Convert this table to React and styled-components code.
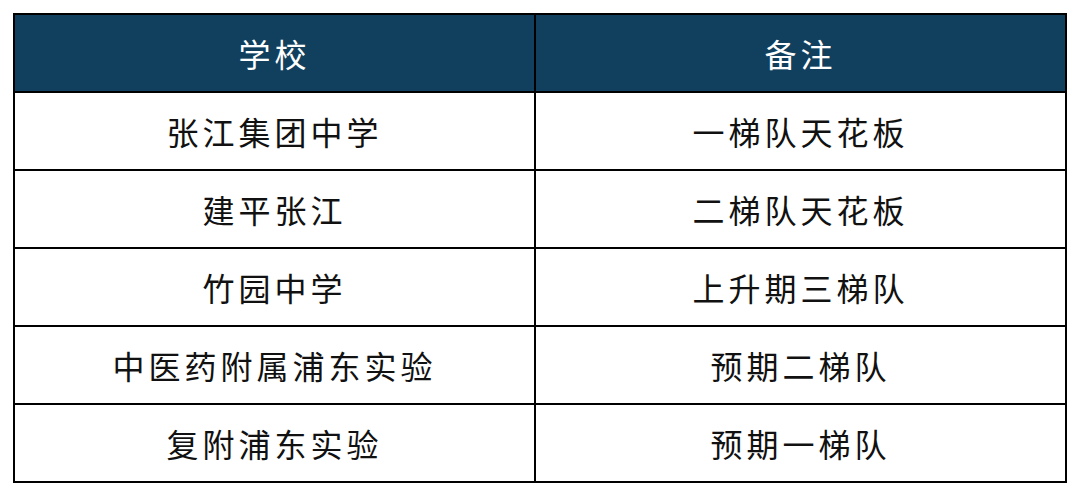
import React from "react";
import styled, { createGlobalStyle } from "styled-components";

const GlobalStyle = createGlobalStyle`
  html, body {
    margin: 0;
    padding: 0;
    background: #ffffff;
  }
`;

const Page = styled.div`
  width: 1080px;
  height: 496px;
  padding: 13px 0 0 13px;
  box-sizing: border-box;
  font-family: "Noto Sans CJK SC", "Noto Sans", sans-serif;
`;

const Table = styled.table`
  width: 1054px;
  border-collapse: collapse;
  table-layout: fixed;
  border: 2px solid #000;
`;

const Th = styled.th`
  height: 76px;
  padding: 0;
  background-color: #11405e;
  color: #ffffff;
  font-size: 32px;
  font-weight: 400;
  letter-spacing: 4px;
  text-align: center;
  border: 2px solid #000;
  width: ${(props) => props.width || "auto"};
`;

const Td = styled.td`
  height: 76px;
  padding: 0;
  color: #111;
  font-size: 32px;
  letter-spacing: 4px;
  text-align: center;
  border: 2px solid #000;
`;

const rows = [
  ["张江集团中学", "一梯队天花板"],
  ["建平张江", "二梯队天花板"],
  ["竹园中学", "上升期三梯队"],
  ["中医药附属浦东实验", "预期二梯队"],
  ["复附浦东实验", "预期一梯队"],
];

const App = () => (
  <Page>
    <GlobalStyle />
    <Table>
      <thead>
        <tr>
          <Th width="519px">学校</Th>
          <Th>备注</Th>
        </tr>
      </thead>
      <tbody>
        {rows.map((r, i) => (
          <tr key={i}>
            <Td>{r[0]}</Td>
            <Td>{r[1]}</Td>
          </tr>
        ))}
      </tbody>
    </Table>
  </Page>
);

export default App;
